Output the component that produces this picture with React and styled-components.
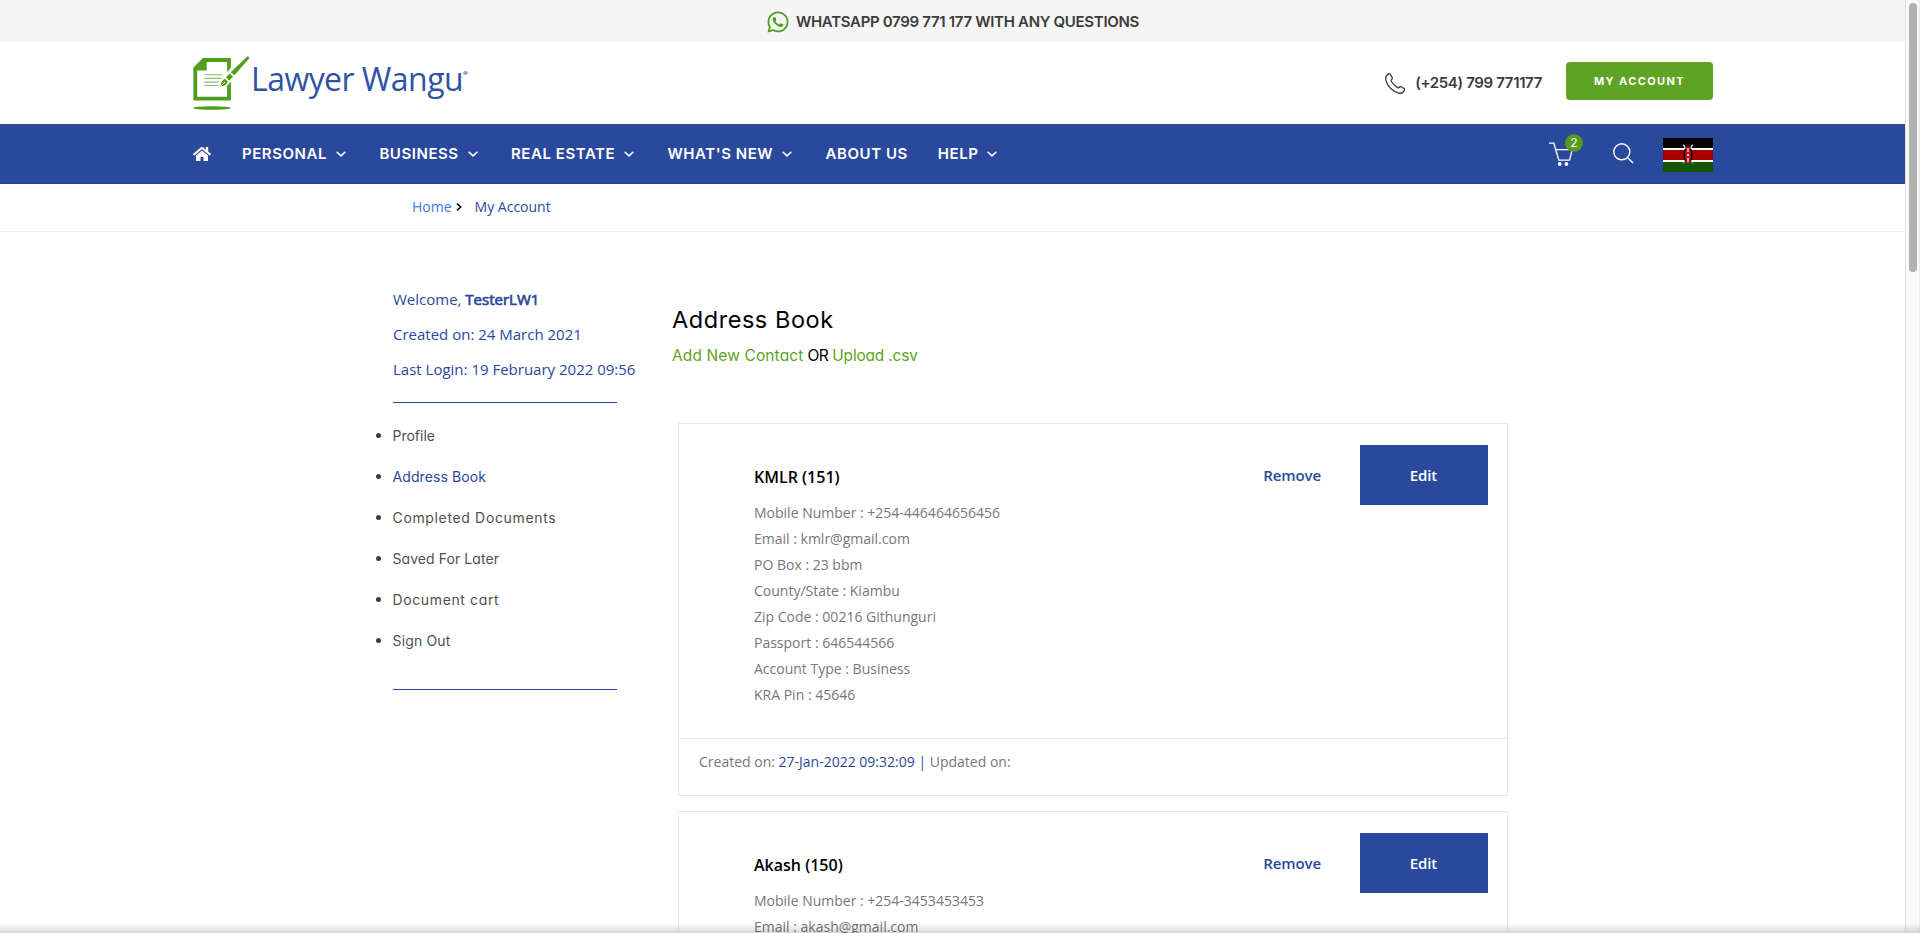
import React from "react";
import styled, { createGlobalStyle } from "styled-components";
import { FaWhatsapp, FaHome } from "react-icons/fa";

const blue = "#2a499c";
const green = "#5fa322";
const display = `Inter, "Liberation Sans", sans-serif`;
const body = `"Open Sans", "Noto Sans", sans-serif`;

const Global = createGlobalStyle`
  * { box-sizing: border-box; }
  html, body { margin: 0; height: 100%; overflow: hidden; background: #fff; }
  body { font-family: ${body}; }
  h1, h2, p, ul { margin: 0; padding: 0; font-weight: 400; }
  a { color: inherit; text-decoration: none; }
  svg { display: block; flex: none; }
`;

const Screen = styled.div`
  display: flex;
  position: relative;
  height: 933px;
  overflow: hidden;
`;
const Page = styled.div`
  flex: 1;
  min-width: 0;
`;
const ScrollTrack = styled.div`
  width: 15px;
  flex: none;
  padding: 3px 2px 0 3px;
  background: #fafafa;
  border-left: 1px solid #e0e0e0;
  border-right: 1px solid #ececec;
`;
const ScrollThumb = styled.div`
  width: 8px;
  height: 269px;
  border-radius: 4px;
  background: #b2b2b2;
`;
const BottomShade = styled.div`
  position: absolute;
  left: 0;
  right: 0;
  bottom: 0;
  height: 10px;
  background: linear-gradient(to bottom, rgba(0, 0, 0, 0), rgba(0, 0, 0, 0.15));
`;

const TopBar = styled.div`
  display: flex;
  justify-content: center;
  align-items: center;
  gap: 7px;
  height: 42px;
  padding-top: 1px;
  background: #f5f5f5;
  color: #3c3c3c;
  font: 600 15px/42px ${display};
  letter-spacing: -0.31px;
  svg { color: #4f9e1c; margin: 1px -1px 0 0; }
`;

const Header = styled.header`
  display: flex;
  align-items: center;
  height: 82px;
  padding: 0 192px 0 193px;
`;
const Brand = styled.a`
  display: flex;
  align-items: center;
  margin-right: auto;
`;
const BrandName = styled.span`
  margin: 0 0 8px 1px;
  color: #2f52a3;
  font: 400 32px/40px ${body};
  letter-spacing: -0.55px;
`;
const BrandDot = styled.span`
  width: 5px;
  height: 4px;
  margin-bottom: 20px;
  border-radius: 50%;
  background: #93a5d0;
`;
const Phone = styled.a`
  display: flex;
  align-items: center;
  gap: 10px;
  margin-right: 24px;
  color: #3c3c3c;
  font: 600 15px/24px ${display};
  letter-spacing: -0.35px;
`;
const AccountButton = styled.a`
  width: 147px;
  height: 38px;
  margin-bottom: 4px;
  border-radius: 4px;
  background: ${green};
  color: #fff;
  text-align: center;
  font: 700 11px/38px ${display};
  letter-spacing: 1.4px;
`;

const Nav = styled.nav`
  display: flex;
  align-items: center;
  gap: 30px;
  height: 60px;
  padding: 0 192px 0 193px;
  background: ${blue};
  border-bottom: 1px solid #27448f;
  color: #fff;
`;
const HomeLink = styled.a`
  margin-right: 1px;
`;
const NavItem = styled.a`
  display: flex;
  align-items: center;
  gap: 9px;
  font: 600 15px/60px ${display};
  letter-spacing: 0.55px;
  svg { margin-right: 3.4px; }
`;
const NavTools = styled.div`
  display: flex;
  align-items: center;
  margin-left: auto;
`;
const Cart = styled.a`
  position: relative;
  margin-right: 40px;
`;
const CartCount = styled.span`
  position: absolute;
  left: 16px;
  top: -8px;
  width: 18px;
  height: 18px;
  border-radius: 50%;
  background: #55991f;
  text-align: center;
  font: 400 12px/18px ${display};
`;
const SearchLink = styled.a`
  margin-right: 29px;
`;
const FlagLink = styled.a`
  margin-top: 3px;
`;

const Crumbs = styled.div`
  display: flex;
  align-items: center;
  height: 48px;
  padding: 0 0 2px 412px;
  border-bottom: 1px solid #eceffa;
  color: ${blue};
  font-size: 14px;
  line-height: 20px;
  svg { margin: 1px 13px 0 4px; }
`;
const CrumbHome = styled.a`
  color: #3b7ad9;
`;

const Main = styled.main`
  display: flex;
`;
const Sidebar = styled.aside`
  width: 280px;
  margin-left: 393px;
  padding-top: 50px;
  flex: none;
`;
const UserLine = styled.p`
  color: ${blue};
  font-size: 15px;
  line-height: 35px;
  white-space: nowrap;
`;
const UserName = styled.span`
  -webkit-text-stroke: 0.7px ${blue};
`;
const Rule = styled.div`
  width: 224px;
  height: 1px;
  margin-top: ${(p) => p.$top}px;
  background: ${blue};
`;
const Menu = styled.ul`
  margin: 12px 0 0 -17px;
  list-style: none;
`;
const MenuItem = styled.li`
  display: flex;
  align-items: center;
  gap: 11.5px;
  color: ${(p) => (p.$active ? blue : "#505050")};
  font: 400 14px/41px ${display};
  font-feature-settings: "cv11";
  letter-spacing: ${(p) => p.$track}px;
  &::before {
    content: "";
    width: 5px;
    height: 5px;
    border-radius: 50%;
    background: #3c3c3c;
  }
`;

const Content = styled.section`
  width: 835px;
  padding-top: 68px;
`;
const Title = styled.h1`
  margin-left: -1px;
  color: #000;
  font: 400 23.5px/40px ${display};
  font-feature-settings: "cv11";
  letter-spacing: 0.55px;
`;
const Actions = styled.p`
  display: flex;
  gap: 4px;
  margin: 1px 0 52px -1px;
  color: #000;
  font: 400 15.5px/30px ${display};
  font-feature-settings: "cv11";
`;
const ActionLink = styled.a`
  color: ${green};
  letter-spacing: ${(p) => p.$track}px;
`;
const Or = styled.span`
  letter-spacing: -0.5px;
`;

const Card = styled.article`
  margin: 0 0 15px 5px;
  border: 1px solid #e8e8e8;
`;
const CardBody = styled.div`
  display: flex;
  justify-content: space-between;
  height: 315px;
  padding: 21px 19px 0 75px;
  border-bottom: 1px solid #e8e8e8;
`;
const Details = styled.div`
  padding-top: 19px;
  color: #777;
  font-size: 14px;
  line-height: 26px;
`;
const ContactName = styled.h2`
  margin-bottom: 10px;
  color: #000;
  font-size: 16px;
  font-weight: 600;
  line-height: 26px;
`;
const CardActions = styled.div`
  display: flex;
  gap: 39px;
  font: 600 15px/60px ${body};
  letter-spacing: -0.1px;
`;
const Remove = styled.a`
  color: ${blue};
`;
const Edit = styled.a`
  width: 128px;
  height: 60px;
  padding-right: 1px;
  background: ${blue};
  border-bottom: 1px solid #27448f;
  color: #fff;
  text-align: center;
`;
const CardFooter = styled.div`
  height: 56px;
  padding: 10px 19px 0 20px;
  color: #777;
  font-size: 14px;
  line-height: 26px;
`;
const Stamp = styled.span`
  color: ${blue};
`;

const LogoMark = () => (
  <svg width="57" height="55" viewBox="0 0 57 55">
    <path d="M11.500 4H36v38.700H2.300V13z" fill="none" stroke="#4f9e1c" strokeWidth="3.800" />
    <path d="M.5 11.500 10 2h3.700v12.500H.5z" fill="#4f9e1c" />
    <path d="M11.300 18.700h18.400M11.300 22.400h18.400M11.300 26.100h17M11.300 29.500h15" stroke="#8fc06c" strokeWidth="1.100" />
    <path d="M27 31 42 14" stroke="#fff" strokeWidth="9" />
    <path d="M27.500 30.600c.3-3.600 1.800-6.600 4.300-7.800l3.100 2.800c-1 2.700-3.500 4.700-7.400 5z" fill="#4f9e1c" />
    <path d="m28.300 29.700 4-4" stroke="#fff" strokeWidth=".9" />
    <path d="m33 21.500 3.500-4 3.600 3-3.700 4z" fill="#4f9e1c" />
    <path d="M37.700 16.200 54 .7c1.300-.7 2.700.6 2 2L41.300 19.200z" fill="#4f9e1c" />
    <ellipse cx="19" cy="52" rx="18.800" ry="1.700" fill="#4f9e1c" />
  </svg>
);

const PhoneIcon = () => (
  <svg width="20" height="21" viewBox="0 0 20 21" fill="none" stroke="#3c3c3c" strokeWidth="1.300" strokeLinejoin="round">
    <path d="M3.700.9c.6-.3 1.200-.2 1.600.4l1.900 3.300c.3.6.2 1.100-.4 1.600-.9.8-1 1.400-.4 2.300 1.700 2.500 3.400 4.200 5.900 5.900.9.600 1.500.5 2.300-.4.5-.5 1-.7 1.600-.3l3 1.900c.6.400.7 1 .4 1.500-1.300 2.400-3.300 3.600-5.800 3C7.500 18.600 2.300 13.300.8 6.800.3 4.500 1.400 2.200 3.700.9z" />
  </svg>
);

const Chevron = () => (
  <svg width="10" height="6" viewBox="0 0 10 6" fill="none" stroke="#fff" strokeWidth="1.500">
    <path d="m.6.700 4.400 4.200L9.400.700" />
  </svg>
);

const CrumbArrow = () => (
  <svg width="6" height="8" viewBox="0 0 6 8" fill="none" stroke="#000" strokeWidth="1.500">
    <path d="m1 .6 3.700 3.400L1 7.400" />
  </svg>
);

const CartIcon = () => (
  <svg width="24" height="24" viewBox="0 0 24 24" fill="none" stroke="#fff" strokeWidth="1.300">
    <path d="M0 1.200h4.800l5 17h10.700L23.200 7.700H6.800" />
    <circle cx="10.700" cy="22" r="1.900" fill="#fff" stroke="none" />
    <circle cx="17.400" cy="22" r="1.900" fill="#fff" stroke="none" />
  </svg>
);

const SearchIcon = () => (
  <svg width="21" height="21" viewBox="0 0 21 21" fill="none" stroke="#fff" strokeWidth="1.400">
    <circle cx="8.800" cy="8.800" r="8" />
    <path d="m14.300 14.300 5.700 5.700" />
  </svg>
);

const KenyaFlag = () => (
  <svg width="50" height="34" viewBox="0 0 50 34">
    <path fill="#000" d="M0 0h50v10H0z" />
    <path fill="#fff" d="M0 10h50v14H0z" />
    <path fill="#a80000" d="M0 12h50v10H0z" />
    <path fill="#145600" d="M0 24h50v10H0z" />
    <path d="M20 7c1.700.3 2 1.500 2 3.500M30 7c-1.700.3-2 1.500-2 3.500" fill="none" stroke="#fff" strokeWidth="1.200" />
    <path d="m22 23-2 3M28 23l2 3" fill="none" stroke="#8aa583" strokeWidth="1" />
    <ellipse cx="25" cy="17" rx="4.600" ry="8" fill="#000" />
    <path d="M25 8c2.200 1.300 2.900 4.500 2.900 9s-.7 7.700-2.900 9c-2.200-1.300-2.900-4.500-2.900-9s.7-7.700 2.900-9z" fill="#c2101c" />
    <path d="M25 10v4M25 20v4" stroke="#eec4c4" strokeWidth="1.500" />
    <circle cx="25" cy="17" r="1.100" fill="#fff" />
  </svg>
);

const navItems = [
  { label: "PERSONAL", menu: true },
  { label: "BUSINESS", menu: true },
  { label: "REAL ESTATE", menu: true },
  { label: "WHAT'S NEW", menu: true },
  { label: "ABOUT US" },
  { label: "HELP", menu: true },
];

const menuItems = [
  { label: "Profile", track: 0 },
  { label: "Address Book", track: 0.1, active: true },
  { label: "Completed Documents", track: 0.65 },
  { label: "Saved For Later", track: 0.07 },
  { label: "Document cart", track: 0.62 },
  { label: "Sign Out", track: 0.15 },
];

const contacts = [
  {
    name: "KMLR (151)",
    created: "27-Jan-2022 09:32:09",
    rows: [
      "Mobile Number : +254-446464656456",
      "Email : kmlr@gmail.com",
      "PO Box : 23 bbm",
      "County/State : Kiambu",
      "Zip Code : 00216 Githunguri",
      "Passport : 646544566",
      "Account Type : Business",
      "KRA Pin : 45646",
    ],
  },
  {
    name: "Akash (150)",
    rows: ["Mobile Number : +254-3453453453", "Email : akash@gmail.com"],
  },
];

const ContactCard = ({ contact }) => (
  <Card>
    <CardBody>
      <Details>
        <ContactName>{contact.name}</ContactName>
        {contact.rows.map((row) => (
          <p key={row}>{row}</p>
        ))}
      </Details>
      <CardActions>
        <Remove href="#">Remove</Remove>
        <Edit href="#">Edit</Edit>
      </CardActions>
    </CardBody>
    {contact.created && (
      <CardFooter>
        Created on: <Stamp>{contact.created} |</Stamp> Updated on:
      </CardFooter>
    )}
  </Card>
);

export default function App() {
  return (
    <>
      <Global />
      <Screen>
        <Page>
          <TopBar>
            <FaWhatsapp size={24} />
            WHATSAPP 0799 771 177 WITH ANY QUESTIONS
          </TopBar>
          <Header>
            <Brand href="#">
              <LogoMark />
              <BrandName>Lawyer Wangu</BrandName>
              <BrandDot />
            </Brand>
            <Phone href="#">
              <PhoneIcon />
              (+254) 799 771177
            </Phone>
            <AccountButton href="#">MY ACCOUNT</AccountButton>
          </Header>
          <Nav>
            <HomeLink href="#">
              <FaHome size={18} />
            </HomeLink>
            {navItems.map((item) => (
              <NavItem key={item.label} href="#">
                {item.label}
                {item.menu && <Chevron />}
              </NavItem>
            ))}
            <NavTools>
              <Cart href="#">
                <CartIcon />
                <CartCount>2</CartCount>
              </Cart>
              <SearchLink href="#">
                <SearchIcon />
              </SearchLink>
              <FlagLink href="#">
                <KenyaFlag />
              </FlagLink>
            </NavTools>
          </Nav>
          <Crumbs>
            <CrumbHome href="#">Home</CrumbHome>
            <CrumbArrow />
            My Account
          </Crumbs>
          <Main>
            <Sidebar>
              <UserLine>
                Welcome, <UserName>TesterLW1</UserName>
              </UserLine>
              <UserLine>Created on: 24 March 2021</UserLine>
              <UserLine>Last Login: 19 February 2022 09:56</UserLine>
              <Rule $top={15} />
              <Menu>
                {menuItems.map((item) => (
                  <MenuItem key={item.label} $active={item.active} $track={item.track}>
                    {item.label}
                  </MenuItem>
                ))}
              </Menu>
              <Rule $top={28} />
            </Sidebar>
            <Content>
              <Title>Address Book</Title>
              <Actions>
                <ActionLink href="#" $track={0.12}>Add New Contact</ActionLink>
                <Or>OR</Or>
                <ActionLink href="#" $track={-0.2}>Upload .csv</ActionLink>
              </Actions>
              {contacts.map((contact) => (
                <ContactCard key={contact.name} contact={contact} />
              ))}
            </Content>
          </Main>
        </Page>
        <ScrollTrack>
          <ScrollThumb />
        </ScrollTrack>
        <BottomShade />
      </Screen>
    </>
  );
}
